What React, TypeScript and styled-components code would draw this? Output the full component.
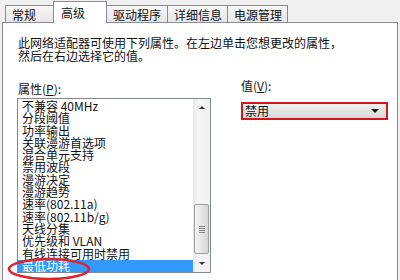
import React from 'react'
import styled, { createGlobalStyle } from 'styled-components'

const GlobalStyle = createGlobalStyle`
  html, body { margin: 0; padding: 0; background: #f0f0f0; }
  body {
    font-family: 'Noto Sans CJK SC', 'DejaVu Sans', sans-serif;
    font-size: 12px;
    color: #111;
  }
`

const Window = styled.div`
  position: relative;
  width: 400px;
  height: 280px;
  overflow: hidden;
`

const TabBar = styled.div`
  position: relative;
  z-index: 1;
  display: flex;
  align-items: flex-end;
  height: 22px;
  padding-left: 6px;
`

const Tab = styled.div<{ $active?: boolean; $w: number }>`
  box-sizing: border-box;
  display: flex;
  align-items: center;
  width: ${p => p.$w}px;
  height: ${p => (p.$active ? 22 : 17)}px;
  margin-left: -1px;
  margin-bottom: ${p => (p.$active ? -1 : 0)}px;
  padding-left: ${p => (p.$active ? 7 : 6)}px;
  padding-top: ${p => (p.$active ? 0 : 1)}px;
  border: 1px solid #898c95;
  border-bottom: none;
  background: ${p => (p.$active ? '#fff' : 'linear-gradient(#f7f7f7, #e6e6e6)')};
  white-space: nowrap;
`

const Panel = styled.div`
  box-sizing: border-box;
  width: 396px;
  height: 270px;
  margin-left: 2px;
  padding: 13px 14px 0 15px;
  border: 1px solid #898c95;
  border-bottom: none;
  background: #fff;
`

const Description = styled.p`
  margin: 0;
  line-height: 13px;
`

const Columns = styled.div`
  display: flex;
  gap: 30px;
  margin-top: 17px;
`

const LeftCol = styled.div`
  display: flex;
  flex-direction: column;
  padding-top: 3px;
`

const RightCol = styled.div`
  display: flex;
  flex-direction: column;
`

const Label = styled.div<{ $lh: number }>`
  line-height: ${p => p.$lh}px;
  u { text-decoration: underline; }
`

const ListBox = styled.div`
  box-sizing: border-box;
  display: flex;
  width: 194px;
  height: 175px;
  margin: 2px 0 0 -1px;
  border: 1px solid #828790;
  background: #fff;
`

const Items = styled.div`
  flex: 1;
  padding-top: 1px;
  overflow: hidden;
`

const Row = styled.div<{ $selected?: boolean }>`
  height: 12.3px;
  line-height: 12.3px;
  padding-left: 4px;
  white-space: nowrap;
  background: ${p => (p.$selected ? '#3399ff' : 'transparent')};
  color: ${p => (p.$selected ? '#fff' : '#111')};
`

const ScrollBar = styled.div`
  display: flex;
  flex-direction: column;
  width: 17px;
  background: linear-gradient(90deg, #e8e8e8, #f5f5f5 30%, #f1f1f1);
`

const ScrollBtn = styled.div`
  display: flex;
  align-items: center;
  justify-content: center;
  height: 17px;
`

const Arrow = styled.span<{ $up?: boolean }>`
  width: 0;
  height: 0;
  border-left: 3px solid transparent;
  border-right: 3px solid transparent;
  ${p => (p.$up ? 'border-bottom: 3px solid #333;' : 'border-top: 3px solid #333;')}
`

const Track = styled.div`
  flex: 1;
  display: flex;
  flex-direction: column;
  justify-content: flex-end;
  padding: 0 1px 1px 1px;
`

const Thumb = styled.div`
  box-sizing: border-box;
  height: 50px;
  border: 1px solid #a0a0a0;
  border-radius: 2px;
  background: linear-gradient(90deg, #f4f4f4, #e6e6e6 50%, #d6d6d6);
  display: flex;
  flex-direction: column;
  align-items: center;
  justify-content: center;
  gap: 1px;
`

const Grip = styled.span`
  width: 6px;
  height: 1px;
  background: #8a8a8a;
`

const RedFrame = styled.div`
  box-sizing: border-box;
  width: 147px;
  height: 18px;
  margin-top: 10px;
  border: 2px solid #d2161e;
`

const Combo = styled.div`
  box-sizing: border-box;
  display: flex;
  align-items: center;
  justify-content: space-between;
  height: 100%;
  padding: 0 7px 0 2px;
  background: linear-gradient(#f2f2f2, #e3e3e3 50%, #d9d9d9);
  line-height: 14px;
`

const ComboArrow = styled.span`
  width: 0;
  height: 0;
  border-left: 4px solid transparent;
  border-right: 4px solid transparent;
  border-top: 4px solid #111;
`

const Ellipse = styled.svg`
  position: absolute;
  left: 6px;
  top: 256px;
`

const tabs = [
  { name: '常规', w: 49 },
  { name: '高级', w: 54, active: true },
  { name: '驱动程序', w: 62 },
  { name: '详细信息', w: 61 },
  { name: '电源管理', w: 61 },
]

const properties = [
  '不兼容 40MHz',
  '分段阈值',
  '功率输出',
  '关联漫游首选项',
  '混合单元支持',
  '禁用波段',
  '漫游决定',
  '漫游趋势',
  '速率(802.11a)',
  '速率(802.11b/g)',
  '天线分集',
  '优先级和 VLAN',
  '有线连接可用时禁用',
  '最低功耗',
]

export default function App() {
  const selected = '最低功耗'
  return (
    <Window>
      <GlobalStyle />
      <TabBar>
        {tabs.map(t => (
          <Tab key={t.name} $w={t.w} $active={t.active}>
            {t.name}
          </Tab>
        ))}
      </TabBar>
      <Panel>
        <Description>
          此网络适配器可使用下列属性。在左边单击您想更改的属性，
          <br />
          然后在右边选择它的值。
        </Description>
        <Columns>
          <LeftCol>
            <Label $lh={14}>
              属性(<u>P</u>):
            </Label>
            <ListBox>
              <Items>
                {properties.map(p => (
                  <Row key={p} $selected={p === selected}>
                    {p}
                  </Row>
                ))}
              </Items>
              <ScrollBar>
                <ScrollBtn>
                  <Arrow $up />
                </ScrollBtn>
                <Track>
                  <Thumb>
                    <Grip />
                    <Grip />
                    <Grip />
                    <Grip />
                  </Thumb>
                </Track>
                <ScrollBtn>
                  <Arrow />
                </ScrollBtn>
              </ScrollBar>
            </ListBox>
          </LeftCol>
          <RightCol>
            <Label $lh={13}>
              值(<u>V</u>):
            </Label>
            <RedFrame>
              <Combo>
                禁用
                <ComboArrow />
              </Combo>
            </RedFrame>
          </RightCol>
        </Columns>
      </Panel>
      <Ellipse width="86" height="26" viewBox="0 0 86 26">
        <ellipse cx="43" cy="13" rx="40" ry="10" fill="none" stroke="#d9262e" strokeWidth="2.6" />
      </Ellipse>
    </Window>
  )
}
